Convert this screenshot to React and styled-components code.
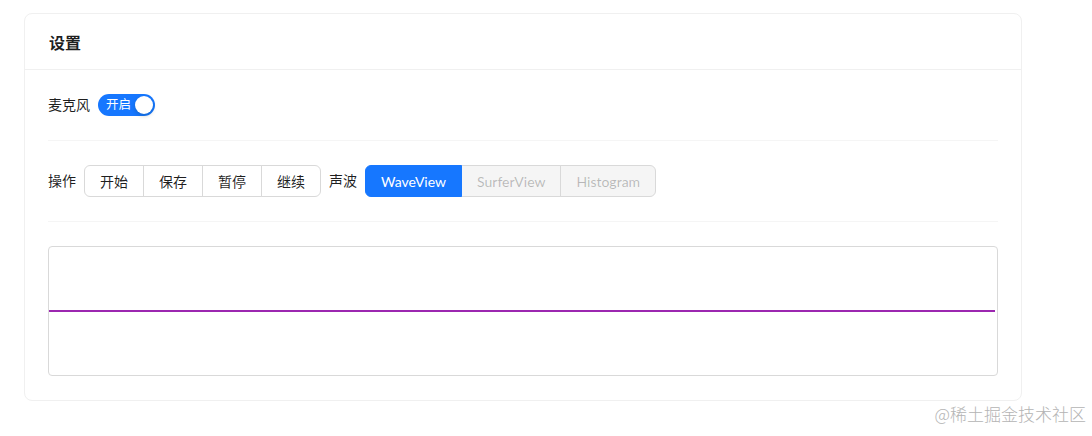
import styled, { createGlobalStyle } from "styled-components";

const GlobalStyle = createGlobalStyle`
  html, body {
    margin: 0;
    padding: 0;
    background: #ffffff;
    font-family: "Noto Sans", "Noto Sans CJK SC", sans-serif;
    color: rgba(0, 0, 0, 0.88);
  }
  * {
    box-sizing: border-box;
  }
`;

/* ========== Layout ========== */
const Page = styled.div`
  position: relative;
  width: 1092px;
  height: 436px;
  padding: 13px 0 0 24px;
`;

const Card = styled.div`
  width: 998px;
  border: 1px solid #f0f0f0;
  border-radius: 8px;
  background: #fff;
`;

const CardHead = styled.div`
  height: 56px;
  display: flex;
  align-items: center;
  padding: 0 24px;
  border-bottom: 1px solid #f0f0f0;
  font-size: 16px;
  font-weight: 600;
`;

const CardBody = styled.div`
  padding: 24px 23px;
`;

const Row = styled.div`
  display: flex;
  align-items: center;
  gap: 8px;
  font-size: 14px;
`;

const Label = styled.span`
  font-size: 14px;
  line-height: 22px;
  white-space: nowrap;
`;

const Divider = styled.div`
  height: 1px;
  margin: 24px 0;
  background: #f5f5f5;
`;

/* ========== Switch ========== */
const Switch = styled.button`
  position: relative;
  width: 57px;
  height: 22px;
  border: none;
  border-radius: 11px;
  background: #1677ff;
  color: #fff;
  font-family: inherit;
  font-size: 12.5px;
  line-height: 22px;
  padding: 0 24px 0 8px;
  text-align: left;
  cursor: pointer;

  &::after {
    content: "";
    position: absolute;
    top: 2px;
    right: 2px;
    width: 18px;
    height: 18px;
    border-radius: 50%;
    background: #fff;
    box-shadow: 0 2px 4px rgba(0, 35, 11, 0.2);
  }
`;

/* ========== Buttons ========== */
const Group = styled.div`
  display: flex;
`;

const GroupButton = styled.button`
  height: 32px;
  padding: 0 15px;
  font-family: "Lato", "Noto Sans CJK SC", sans-serif;
  font-size: 14px;
  border: 1px solid #d9d9d9;
  margin-left: -1px;
  background: ${({ $active, $disabled }) =>
    $active ? "#1677ff" : $disabled ? "#f5f5f5" : "#fff"};
  border-color: ${({ $active }) => ($active ? "#1677ff" : "#d9d9d9")};
  color: ${({ $active, $disabled }) =>
    $active ? "#fff" : $disabled ? "rgba(0,0,0,0.25)" : "rgba(0,0,0,0.88)"};
  cursor: ${({ $disabled }) => ($disabled ? "not-allowed" : "pointer")};
  position: relative;
  z-index: ${({ $active }) => ($active ? 1 : 0)};

  &:first-child {
    margin-left: 0;
    border-radius: 6px 0 0 6px;
  }

  &:last-child {
    border-radius: 0 6px 6px 0;
  }
`;

/* ========== Wave ========== */
const WaveBox = styled.div`
  height: 130px;
  border: 1px solid #d9d9d9;
  border-radius: 4px;
  overflow: hidden;
`;

const WaveSvg = styled.svg`
  display: block;
  width: 100%;
  height: 100%;
`;

const Watermark = styled.div`
  position: absolute;
  right: 6px;
  bottom: 10px;
  font-family: "Noto Sans CJK SC", sans-serif;
  font-size: 17px;
  font-weight: 300;
  color: #b4b4b4;
`;

/* ========== Component ========== */
const actions = ["开始", "保存", "暂停", "继续"];
const views = [
  { name: "WaveView", active: true },
  { name: "SurferView", disabled: true },
  { name: "Histogram", disabled: true },
];

export default function App() {
  return (
    <>
      <GlobalStyle />
      <Page>
        <Card>
          <CardHead>设置</CardHead>
          <CardBody>
            <Row>
              <Label>麦克风</Label>
              <Switch>开启</Switch>
            </Row>

            <Divider />

            <Row>
              <Label>操作</Label>
              <Group>
                {actions.map((a) => (
                  <GroupButton key={a}>{a}</GroupButton>
                ))}
              </Group>
              <Label>声波</Label>
              <Group>
                {views.map((v) => (
                  <GroupButton
                    key={v.name}
                    $active={v.active}
                    $disabled={v.disabled}
                  >
                    {v.name}
                  </GroupButton>
                ))}
              </Group>
            </Row>

            <Divider />

            <WaveBox>
              <WaveSvg viewBox="0 0 948 128" preserveAspectRatio="none">
                <line
                  x1="0"
                  y1="64"
                  x2="946"
                  y2="64"
                  stroke="#9c27b0"
                  strokeWidth="2"
                />
              </WaveSvg>
            </WaveBox>
          </CardBody>
        </Card>
        <Watermark>@稀土掘金技术社区</Watermark>
      </Page>
    </>
  );
}
